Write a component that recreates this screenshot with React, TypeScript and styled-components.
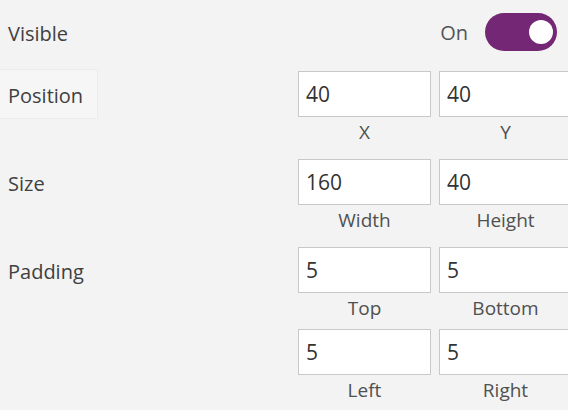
import * as React from 'react';
import styled, { createGlobalStyle } from 'styled-components';

const GlobalStyle = createGlobalStyle`
  html, body {
    margin: 0;
    padding: 0;
    background: #f3f3f3;
    overflow: hidden;
  }
  body {
    font-family: 'Open Sans', 'Noto Sans', sans-serif;
    color: #404040;
  }
`;

const Panel = styled.div`
  width: 568px;
  height: 410px;
  overflow: hidden;
  background: #f3f3f3;
`;

const VisibleRow = styled.div`
  display: flex;
  align-items: center;
  justify-content: space-between;
  height: 64px;
  margin-bottom: 7px;
  padding: 2px 11px 0 8px;
  box-sizing: border-box;
`;

const RowTitle = styled.span`
  font-size: 20px;
`;

const ToggleGroup = styled.div`
  display: flex;
  align-items: center;
  gap: 17px;
  margin-top: -2px;
`;

const ToggleText = styled.span`
  font-size: 20px;
  color: #555;
`;

const Switch = styled.div<{ $on: boolean }>`
  width: 72px;
  height: 38px;
  border-radius: 19px;
  background: ${({ $on }) => ($on ? '#742774' : '#bbb')};
  display: flex;
  align-items: center;
  justify-content: ${({ $on }) => ($on ? 'flex-end' : 'flex-start')};
  padding: 0 4px;
  box-sizing: border-box;
`;

const Knob = styled.div`
  width: 24px;
  height: 24px;
  border-radius: 50%;
  background: #fff;
`;

const PropertyRow = styled.div`
  display: grid;
  grid-template-columns: 298px auto;
  align-items: start;
  margin-bottom: 10px;
`;

const Label = styled.div<{ $highlighted?: boolean }>`
  width: 98px;
  height: 46px;
  line-height: 46px;
  font-size: 20px;
  padding-left: 8px;
  padding-top: 2px;
  box-sizing: border-box;
  ${({ $highlighted }) =>
    $highlighted &&
    `
    height: 50px;
    margin-top: -2px;
    padding-top: 3px;
    background: #f6f6f6;
    border: 1px solid #ececec;
    border-left: none;
  `}
`;

const Fields = styled.div`
  display: grid;
  grid-template-columns: 133px 133px;
  column-gap: 8px;
  row-gap: 4px;
`;

const Field = styled.div`
  display: flex;
  flex-direction: column;
`;

const Input = styled.input`
  width: 133px;
  height: 46px;
  box-sizing: border-box;
  border: 1px solid #c8c8c8;
  background: #fff;
  font-family: 'Open Sans', 'Noto Sans', sans-serif;
  font-size: 21px;
  color: #333;
  padding: 0 0 0 7px;
  margin: 0;
  outline: none;
`;

const Caption = styled.div`
  height: 32px;
  line-height: 30px;
  text-align: center;
  font-size: 19px;
  color: #505050;
`;

type FieldDef = { value: string; caption: string };

const FieldGroup = ({ fields }: { fields: FieldDef[] }) => (
  <Fields>
    {fields.map((f) => (
      <Field key={f.caption}>
        <Input defaultValue={f.value} />
        <Caption>{f.caption}</Caption>
      </Field>
    ))}
  </Fields>
);

export default function App() {
  return (
    <Panel>
      <GlobalStyle />
      <VisibleRow>
        <RowTitle>Visible</RowTitle>
        <ToggleGroup>
          <ToggleText>On</ToggleText>
          <Switch $on>
            <Knob />
          </Switch>
        </ToggleGroup>
      </VisibleRow>
      <PropertyRow>
        <Label $highlighted>Position</Label>
        <FieldGroup
          fields={[
            { value: '40', caption: 'X' },
            { value: '40', caption: 'Y' },
          ]}
        />
      </PropertyRow>
      <PropertyRow>
        <Label>Size</Label>
        <FieldGroup
          fields={[
            { value: '160', caption: 'Width' },
            { value: '40', caption: 'Height' },
          ]}
        />
      </PropertyRow>
      <PropertyRow>
        <Label>Padding</Label>
        <FieldGroup
          fields={[
            { value: '5', caption: 'Top' },
            { value: '5', caption: 'Bottom' },
            { value: '5', caption: 'Left' },
            { value: '5', caption: 'Right' },
          ]}
        />
      </PropertyRow>
    </Panel>
  );
}
